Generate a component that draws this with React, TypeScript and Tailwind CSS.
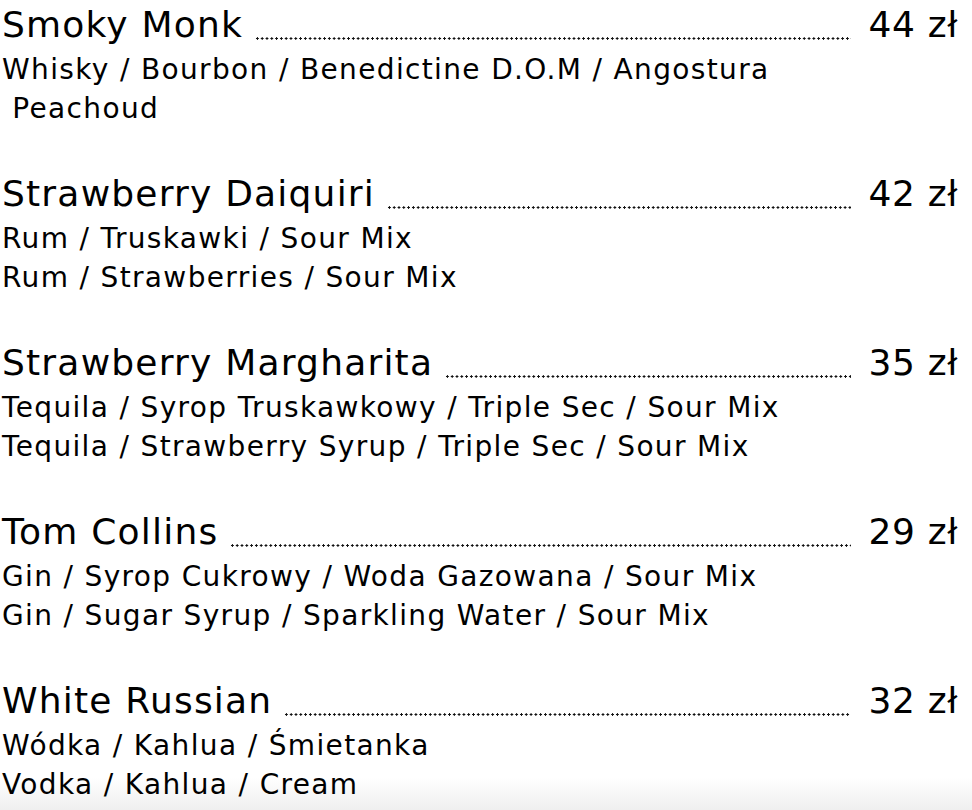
const items = [
  {
    name: "Smoky Monk",
    price: "44 zł",
    lines: ["Whisky / Bourbon / Benedictine D.O.M / Angostura", "\u00a0Peachoud"],
  },
  {
    name: "Strawberry Daiquiri",
    price: "42 zł",
    lines: ["Rum / Truskawki / Sour Mix", "Rum / Strawberries / Sour Mix"],
  },
  {
    name: "Strawberry Margharita",
    price: "35 zł",
    lines: [
      "Tequila / Syrop Truskawkowy / Triple Sec / Sour Mix",
      "Tequila / Strawberry Syrup / Triple Sec / Sour Mix",
    ],
  },
  {
    name: "Tom Collins",
    price: "29 zł",
    lines: [
      "Gin / Syrop Cukrowy / Woda Gazowana / Sour Mix",
      "Gin / Sugar Syrup / Sparkling Water / Sour Mix",
    ],
  },
  {
    name: "White Russian",
    price: "32 zł",
    lines: ["Wódka / Kahlua / Śmietanka", "Vodka / Kahlua / Cream"],
  },
];

export default function App() {
  return (
    <div className="w-[972px] h-[810px] overflow-hidden bg-[linear-gradient(to_bottom,#ffffff_96%,#efefef)] text-black font-['DejaVu_Sans',sans-serif]">
      <div className="flex flex-col gap-[42px] pt-[1px] pl-[2px] pr-[14px]">
        {items.map((item) => (
          <div key={item.name}>
            <div className="flex items-end h-[50px] pb-[8px] text-[36px] leading-none tracking-[1.2px]">
              <span>{item.name}</span>
              <span className="flex-1 ml-[12px] mr-[18px] mb-[3px] h-[3px] bg-[radial-gradient(circle,#111_1px,transparent_1.3px)] bg-[length:4.8px_3px] bg-repeat-x" />
              <span className="tracking-[0.6px]">{item.price}</span>
            </div>
            {item.lines.map((l) => (
              <div key={l} className="text-[28px] leading-[38.5px] tracking-[1.35px] whitespace-pre">
                {l}
              </div>
            ))}
          </div>
        ))}
      </div>
    </div>
  );
}
